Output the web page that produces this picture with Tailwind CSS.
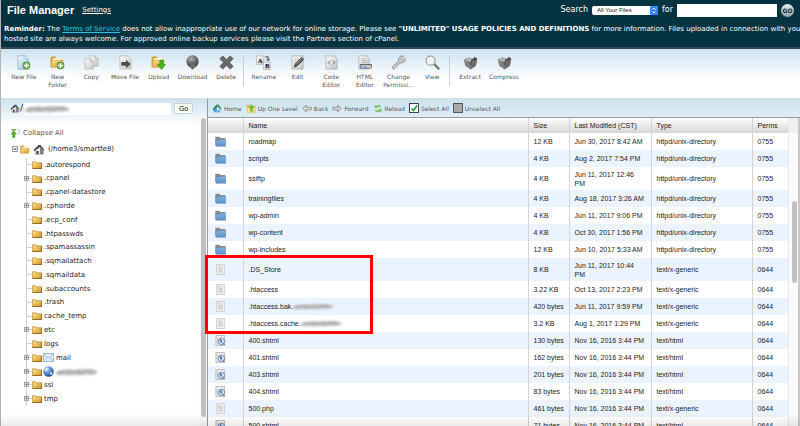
<!DOCTYPE html>
<html lang="en">
<head>
  <meta charset="UTF-8" />
  <meta name="viewport" content="width=device-width, initial-scale=1.0" />
  <title>File Manager</title>
  <script src="https://cdn.jsdelivr.net/npm/@tailwindcss/browser@4"></script>
</head>
<body class="h-screen overflow-hidden flex flex-col bg-white border-l border-[#b4b4b4] font-['DejaVu_Sans',sans-serif] text-[7px] text-[#222]">

  <!-- Icons -->
  <svg class="absolute size-0">
    <defs>
      <linearGradient id="gold" x1="0" y1="0" x2="1" y2="1"><stop offset="0" stop-color="#fbe9a0"/><stop offset="1" stop-color="#d79218"/></linearGradient>
      <linearGradient id="blue" x1="0" y1="0" x2="0" y2="1"><stop offset="0" stop-color="#84b4e2"/><stop offset="1" stop-color="#5c90ca"/></linearGradient>
      <linearGradient id="page" x1="0" y1="0" x2="1" y2="1"><stop offset="0" stop-color="#fdfdfd"/><stop offset="1" stop-color="#c4c4c4"/></linearGradient>
      <linearGradient id="bluepage" x1="0" y1="0" x2="1" y2="1"><stop offset="0" stop-color="#f4faff"/><stop offset="1" stop-color="#8fbfe8"/></linearGradient>
      <radialGradient id="ball" cx=".4" cy=".3" r=".7"><stop offset="0" stop-color="#b0b0b0"/><stop offset="1" stop-color="#3c3c3c"/></radialGradient>
      <radialGradient id="sea" cx=".35" cy=".3" r=".8"><stop offset="0" stop-color="#a9d4fa"/><stop offset="1" stop-color="#0b3c9a"/></radialGradient>
    </defs>
    <symbol id="i-plus" viewBox="0 0 8 8"><circle cx="4" cy="4" r="3.7" fill="#6fb04a" stroke="#3f8028" stroke-width=".6"/><path d="M4 1.6v4.800M1.600 4h4.800" stroke="#fff" stroke-width="1.500"/></symbol>
    <symbol id="i-openfolder" viewBox="0 0 16 14"><path d="M1 12V2l1-1h4l1 2h6v9z" fill="#dca638" stroke="#b98a2a" stroke-width=".6"/><path d="M3 3l10-1v8H3z" fill="#fffbe0"/><path d="M1 13l1.500-8H15l-1.500 8z" fill="url(#gold)" stroke="#c4912c" stroke-width=".6"/></symbol>
    <symbol id="i-folder" viewBox="0 0 10 8"><path d="M.4 7.500V.8h3.400l.8 1h5v5.700z" fill="url(#gold)" stroke="#a8761a" stroke-width=".6"/><path d="M.6 7.600h9.100V2.400" fill="none" stroke="#5f4514" stroke-width=".6"/></symbol>
    <symbol id="i-newfile" viewBox="0 0 16 16"><path d="M2 .8h8l3 3v11.400H2z" fill="url(#bluepage)" stroke="#8eaac2" stroke-width=".7"/><path d="M10 .8v3h3" fill="#fff" stroke="#8eaac2" stroke-width=".6"/><use href="#i-plus" x="7" y="7" width="8.500" height="8.500"/></symbol>
    <symbol id="i-newfolder" viewBox="0 0 16 16"><use href="#i-openfolder" x="0" y="1" width="15" height="13"/><use href="#i-plus" x="7" y="7" width="8.500" height="8.500"/></symbol>
    <symbol id="i-copy" viewBox="0 0 16 16"><path d="M6 1h6l3 3v8H6z" fill="url(#page)" stroke="#aaa" stroke-width=".6"/><path d="M1 4h6l3 3v8H1z" fill="url(#page)" stroke="#aaa" stroke-width=".6"/><path d="M7 4v3h3M12 1v3h3" fill="none" stroke="#aaa" stroke-width=".6"/></symbol>
    <symbol id="i-move" viewBox="0 0 16 16"><path d="M2 1h9l3 3v11H2z" fill="url(#page)" stroke="#aaa" stroke-width=".6"/><path d="M3.500 7.500h5V5l5 4.500-5 4.500v-2.500h-5z" fill="#4d4d4d"/></symbol>
    <symbol id="i-upload" viewBox="0 0 16 16"><use href="#i-openfolder" x="0" y="1" width="15" height="13"/><path d="M9.500 5.500h3.500v4.500h2.500l-4.200 5.500L7 10h2.500z" fill="#4fb81e" stroke="#2c7d0c" stroke-width=".6"/></symbol>
    <symbol id="i-download" viewBox="0 0 16 16"><circle cx="8" cy="6.800" r="6.500" fill="url(#ball)"/><path d="M5.500 8h5v3H13l-5 4.500L3 11h2.500z" fill="#6a6a6a" stroke="#4a4a4a" stroke-width=".4"/></symbol>
    <symbol id="i-delete" viewBox="0 0 16 16"><path d="M4 1l4 4 4-4 3 3-4 4 4 4-3 3-4-4-4 4-3-3 4-4-4-4z" fill="#6a6a6a" stroke="#444" stroke-width=".8"/></symbol>
    <symbol id="i-rename" viewBox="0 0 16 16"><rect x=".5" y="1" width="8" height="9" fill="url(#page)" stroke="#aaa" stroke-width=".6"/><rect x="8" y="7.500" width="7.500" height="8" fill="url(#page)" stroke="#aaa" stroke-width=".6"/><text x="1.800" y="8" font-size="7" font-weight="700" font-family="Liberation Serif">A</text><text x="9.500" y="14" font-size="7" font-weight="700" font-family="Liberation Serif">B</text><path d="M10 2h3v4M11.500 4.500L13 6.200l1.500-1.700" fill="none" stroke="#333" stroke-width="1"/></symbol>
    <symbol id="i-edit" viewBox="0 0 16 16"><path d="M2 1h12v14H2z" fill="url(#page)" stroke="#999" stroke-width=".6"/><path d="M4 4h6M4 6h5M4 8h3" stroke="#bbb" stroke-width=".7"/><path d="M4.500 13l1-3.500 7-7 2 2.300-7 7z" fill="#555" stroke="#222" stroke-width=".6"/><path d="M6.500 10l6-6" stroke="#ddd" stroke-width=".6"/></symbol>
    <symbol id="i-code" viewBox="0 0 16 16"><path d="M2 1h9l3 3v11H2z" fill="url(#page)" stroke="#999" stroke-width=".6"/><path d="M6.500 6L4.500 8l2 2M9.500 6l2 2-2 2" fill="none" stroke="#555" stroke-width="1"/></symbol>
    <symbol id="i-html" viewBox="0 0 16 16"><path d="M2 1h8l3 3v11H2z" fill="url(#page)" stroke="#999" stroke-width=".6"/><path d="M4 4h5M4 6h7M4 8h7" stroke="#aaa" stroke-width=".8"/><rect x="3" y="9.500" width="13" height="5" rx="1" fill="#666"/><text x="4" y="13.600" font-size="4.500" font-weight="700" font-family="Liberation Sans" fill="#fff">HTML</text></symbol>
    <symbol id="i-wrench" viewBox="0 0 16 16"><path d="M1.500 12.500L8 6.500C7.200 3 10 .2 13.200 1.200L10.800 3.800l1.800 1.800L15 3.400c.9 3.200-2 5.800-5.200 5L4 14.600c-1.600 1.300-3.700-.6-2.500-2.100z" fill="#c6c6c6" stroke="#8a8a8a" stroke-width=".8"/></symbol>
    <symbol id="i-view" viewBox="0 0 16 16"><path d="M9.500 9.500l5 5" stroke="#777" stroke-width="2.400" stroke-linecap="round"/><circle cx="6" cy="6" r="4.800" fill="#f3f3f3" stroke="#a2a2a2" stroke-width="1.300"/></symbol>
    <symbol id="i-box" viewBox="0 0 16 16"><path d="M1 5l7 3 7-3-1.300 6.500L8 15.500l-5.700-4z" fill="#808080"/><path d="M8 8l7-3-1.300 6.500L8 15.500z" fill="#6c6c6c"/><path d="M1 5l5-2 4 1 5 1-7 3z" fill="#b4b4b4" stroke="#777" stroke-width=".5"/><path d="M4.500 5.500L8 9c0-3.500 1.500-5 4-5.500V1.500l3.500 2.500L12 6.800V5.500c-2 .7-3 2.500-3.500 5.500z" fill="#484848"/></symbol>
    <symbol id="i-house" viewBox="0 0 12 11"><path d="M2 5.500v4.700h8V5.500L6 2z" fill="#ececec" stroke="#888" stroke-width=".5"/><path d="M.4 6L5.500 1h2l4 5-1.300.6L7 3 1.500 7z" fill="#4a4a4a"/><path d="M7 2.500l3.500 4v3.700H7z" fill="#858585"/><path d="M3.500 7h2v3.200h-2z" fill="#333"/></symbol>
    <symbol id="i-homeblue" viewBox="0 0 12 11"><path d="M2 5.500v4.700h5V5z" fill="#3aa5f0"/><path d="M6 3.500l4.500 3v3.700H6z" fill="#e8eef4" stroke="#7f96ab" stroke-width=".4"/><path d="M.4 6.500L5 1l3-.3 3.500 5-1.300 1L7.200 3 2 7.500z" fill="#3d8a5c"/><path d="M7.500 7H9v3.200H7.500z" fill="#2c6fae"/></symbol>
    <symbol id="i-up" viewBox="0 0 12 11"><path d="M.5 1.500h3.500l1 1H11v8H2z" fill="#f0cd5a" stroke="#c49c30" stroke-width=".6"/><path d="M1.800 4H11l-1 6.500H2z" fill="#fbe792"/><path d="M6.500.8L10 4.500H8V9H5V4.500H3z" fill="#7fbf45" stroke="#4f8f28" stroke-width=".4"/></symbol>
    <symbol id="i-back" viewBox="0 0 12 10"><path d="M1 5l4-4v2.500h6v3H5V9z" fill="#ddd" stroke="#777" stroke-width=".9"/></symbol>
    <symbol id="i-forward" viewBox="0 0 12 10"><path d="M11 5L7 1v2.500H1v3h6V9z" fill="#ddd" stroke="#777" stroke-width=".9"/></symbol>
    <symbol id="i-reload" viewBox="0 0 12 11"><path d="M2 5V1l1.500 1C6 .5 9 1 10.500 4H8C7 3 6 3 5 3.800L6 5z" fill="#7cc06c"/><path d="M10.500 6v4.500L9 9.200C6 11 3 9.500 1.500 7H4c1 1 2 1 3 .3L6 6z" fill="#7cc06c"/></symbol>
    <symbol id="i-collapse" viewBox="0 0 10 9"><path d="M.3 .8h5" stroke="#3b7d22" stroke-width="1"/><path d="M2.800 1.500L5.300 5H4v3.500H1.600V5H.3z" fill="#53b52e" stroke="#2f8414" stroke-width=".4"/><path d="M6.500 1h3M6.500 3h3M6.500 5h3" stroke="#bbb" stroke-width=".8"/></symbol>
    <symbol id="i-mail" viewBox="0 0 11 9"><path d="M.5.500h10v8H.5z" fill="#e2effa" stroke="#88a9c6" stroke-width=".8"/><path d="M.8.800l4.700 4.400L10.200.8M.8 8.200L4 4.500M10.200 8.200L7 4.500" fill="none" stroke="#88a9c6" stroke-width=".7"/></symbol>
    <symbol id="i-globe" viewBox="0 0 11 11"><circle cx="5.500" cy="5.500" r="5.200" fill="url(#sea)"/><path d="M2 3C3.500 1.300 5.500 1.500 5.500 2.500S4 3.500 3.800 4.800 2 4.500 1.500 4zM7 6.500c1.500-.7 2.200 0 2.200.7S8 9 7.300 9z" fill="#dcebf8"/></symbol>
    <symbol id="i-dir" viewBox="0 0 11 11"><path d="M.3 9.500V.7h4.200l1 1.300h4.700V5z" fill="#8a8a8a"/><path d="M1 10.300V4h5l1-1h3.700v7.300z" fill="url(#blue)" stroke="#5c84b4" stroke-width=".5"/></symbol>
    <symbol id="i-text" viewBox="0 0 10 12"><path d="M.5.500h9v11h-9z" fill="#ececec" stroke="#c6c6c6" stroke-width=".8"/><path d="M2.500 3h3M2.500 4.800h5M2.500 6.600h5M2.500 8.400h5" stroke="#b4b4b4" stroke-width=".7"/></symbol>
    <symbol id="i-webpage" viewBox="0 0 11 12"><path d="M.5.500h9.500v11H.5z" fill="#ececec" stroke="#aaa" stroke-width=".8"/><path d="M2 2.500v7" stroke="#c4c4c4" stroke-width="1"/><circle cx="6.500" cy="7" r="3.500" fill="#dde9f6" stroke="#5578a8" stroke-width=".9"/><path d="M5 5l2 1-1 2zM7 8l3 3" fill="#5f88bb" stroke="#46699b" stroke-width="1"/></symbol>
    <symbol id="i-smudge" viewBox="0 0 50 8" preserveAspectRatio="none"><path d="M0 5l5-3 5 0 7-1 5 1 6-1 7 0 6 0 6 1 3 2-2 2-7 1-6-.5-6 1-6-.5-6 .5-6-.5-5 .5-4-.5z" fill="#c2c2c2"/><path d="M4 5l8-2 6 2 7-2 6 2 7-2 7 1" fill="none" stroke="#a2a2a2" stroke-width="1.600"/></symbol>
  </svg>

  <!-- Header -->
  <header class="h-[49px] shrink-0 bg-[#05333f] border-b-2 border-[#33475a] text-white pl-[3px] pr-[6px]">
    <div class="flex items-center h-5">
      <h1 class="pl-[3px] font-['Liberation_Sans',sans-serif] font-bold text-[11px]">File Manager</h1>
      <a href="#" class="ml-2 text-[7px] underline">Settings</a>
      <form class="ml-auto flex items-center gap-1 text-[8px]">
        <label for="scope">Search</label>
        <div class="relative flex">
          <select id="scope" class="appearance-none w-[66px] h-[9px] rounded-xs bg-white pl-[5px] font-['Liberation_Sans',sans-serif] text-[6px] leading-[9px] text-[#222]">
            <option>All Your Files</option>
          </select>
          <svg class="absolute right-0 top-0 w-2 h-[9px] pointer-events-none" viewBox="0 0 8 9"><rect width="8" height="9" rx="1.500" fill="#2f86f3"/><path d="M2.500 3.600L4 2l1.500 1.600M2.500 5.400L4 7l1.500-1.600" fill="none" stroke="#fff" stroke-width=".9"/></svg>
        </div>
        <label for="query">for</label>
        <input id="query" type="text" class="w-[100px] h-[13px] bg-white text-[#222] px-1 text-[8px]" />
        <button type="button" class="size-[13px] rounded-full bg-linear-to-b from-[#e6eef0] to-[#8ba3a9] text-[6px] leading-[13px] font-bold text-[#123]">GO</button>
      </form>
    </div>
    <p class="mt-1 w-[820px] text-[7px] leading-[10px]"><b>Reminder:</b> The <a href="#" class="underline text-[#2cc0e0]">Terms of Service</a> does not allow inappropriate use of our network for online storage. Please see <b>"UNLIMITED" USAGE POLICIES AND DEFINITIONS</b> for more information. Files uploaded in connection with your<br>hosted site are always welcome. For approved online backup services please visit the Partners section of cPanel.</p>
  </header>

  <!-- Toolbar -->
  <nav id="toolbar" class="h-[50px] shrink-0 flex items-start pl-[6px] pt-[6px] bg-linear-to-b from-[#cbe2ef] to-white to-60% border-b border-[#dcdcdc] text-[6px] leading-2 text-[#555]"></nav>

  <div class="flex flex-1 min-h-0">

    <!-- Folder tree -->
    <aside class="relative w-[206px] shrink-0 flex flex-col bg-linear-to-b from-[#cbe2ef] to-white to-[26px]">
      <form class="flex items-center h-[19px] pl-[9px]">
        <svg class="w-[10px] h-[9px]"><use href="#i-house"/></svg>
        <label for="path" class="text-[9px]">/</label>
        <div class="relative w-[147px] ml-px">
          <input id="path" type="text" class="block w-full h-3 bg-white" />
          <svg class="absolute left-0 top-[2px] w-[46px] h-2 blur-[1px]"><use href="#i-smudge"/></svg>
        </div>
        <button type="button" class="ml-[3px] w-[19px] h-[11px] rounded-xs bg-white border border-[#c8d2d8] font-['Liberation_Sans',sans-serif] text-[7px] leading-[9px] text-black">Go</button>
      </form>
      <a href="#" class="flex items-center gap-[2px] h-[14px] mt-2 pl-[10px] text-[#555]"><svg class="w-[10px] h-[9px]"><use href="#i-collapse"/></svg>Collapse All</a>
      <div class="flex items-center h-[18px] pl-[11px]">
        <svg class="size-[6px]" viewBox="0 0 6 6"><rect x=".5" y=".5" width="5" height="5" fill="#fff" stroke="#999"/><path d="M1.500 3h3" stroke="#333"/></svg>
        <svg class="w-[10px] h-[9px] ml-[2px]"><use href="#i-openfolder"/></svg>
        <svg class="w-3 h-[11px] mx-[3px]"><use href="#i-house"/></svg>
        <span>(/home3/smartfe8)</span>
      </div>
      <ul id="tree" class="grid auto-rows-fr h-[248px] shrink-0 ml-[23px]"></ul>
      <div class="absolute right-0 top-[19px] bottom-0 w-2 bg-[#fafafa] flex justify-center">
        <div class="w-[5px] h-[299px] rounded-full bg-[#c1c1c1]"></div>
      </div>
    </aside>

    <!-- File list -->
    <main class="relative flex-1 min-w-0 flex flex-col border-l border-[#999]">
      <div id="actions" class="flex items-center gap-1 h-[19px] shrink-0 pl-[4px] bg-linear-to-b from-[#cbe2ef] to-[#dfeef6] border-b border-[#999] text-[6px] text-[#555]"></div>
      <div class="flex flex-1 min-h-0 border-r-2 border-[#c9c9c9]">
        <div class="flex-1 min-w-0 overflow-hidden">
          <table class="w-full table-fixed font-['Liberation_Sans',sans-serif] text-[7px] leading-[9px]">
            <colgroup><col class="w-[35px]"><col><col class="w-[41px]"><col class="w-[82px]"><col class="w-[101px]"><col class="w-[36px]"></colgroup>
            <thead>
              <tr class="h-[15px] bg-linear-to-b from-white to-[#d6d6d6] text-left">
                <th class="border-r border-[#d4d4d4]"></th>
                <th class="px-[5px] font-normal border-r border-[#d4d4d4]">Name</th>
                <th class="px-[5px] font-normal border-r border-[#d4d4d4]">Size</th>
                <th class="px-[5px] font-normal border-r border-[#d4d4d4] whitespace-nowrap">Last Modified (CST)</th>
                <th class="px-[5px] font-normal border-r border-[#d4d4d4]">Type</th>
                <th class="px-[5px] font-normal">Perms</th>
              </tr>
            </thead>
            <tbody id="files"></tbody>
          </table>
        </div>
        <div class="relative w-[10px] bg-[#fafafa] border-l border-[#e8e8e8]">
          <div class="h-[15px] bg-[#f0f0f0]"></div>
          <div class="absolute left-[3px] top-[83px] w-[5px] h-[82px] rounded-full bg-[#c1c1c1]"></div>
        </div>
      </div>
      <div class="absolute -left-[3px] top-[156px] w-[168px] h-[79px] border-3 border-[#f00]"></div>
    </main>
  </div>
  <div class="fixed inset-x-0 bottom-0 h-3 bg-linear-to-b from-transparent to-black/8 pointer-events-none"></div>

  <script>
    const icon = (name, cls) => `<svg class="${cls}"><use href="#i-${name}"/></svg>`;

    // Toolbar groups: [group width class, [icon, label]...]
    const groups = [
      ['w-[236px]', [['newfile', 'New File'], ['newfolder', 'New Folder'], ['copy', 'Copy'], ['move', 'Move File'], ['upload', 'Upload'], ['download', 'Download'], ['delete', 'Delete']]],
      ['w-[206px]', [['rename', 'Rename'], ['edit', 'Edit'], ['code', 'Code Editor'], ['html', 'HTML Editor'], ['wrench', 'Change Permissi...'], ['view', 'View']]],
      ['w-[72px]', [['box', 'Extract'], ['box', 'Compress']]],
    ];
    document.getElementById('toolbar').innerHTML = groups.map(([width, items], i) =>
      `<div class="${width} h-[31px] flex ${i ? 'border-l border-[#ccc] pl-[3px]' : ''}">` +
      items.map(([name, label]) =>
        `<button class="flex-1 min-w-0 flex flex-col items-center gap-[3px] px-[2px]">${icon(name, 'size-[15px] shrink-0')}<span>${label}</span></button>`
      ).join('') + '</div>').join('');

    const actions = [['homeblue', 'Home'], ['up', 'Up One Level'], ['back', 'Back'], ['forward', 'Forward'], ['reload', 'Reload']];
    document.getElementById('actions').innerHTML = actions.map(([name, label]) =>
      `<button class="flex items-center gap-[2px]">${icon(name, 'w-[10px] h-[9px]')}${label}</button>`).join('') +
      `<button class="flex items-center gap-[2px]"><svg class="size-[10px]" viewBox="0 0 10 10"><rect x=".5" y=".5" width="9" height="9" fill="#fff" stroke="#444"/><path d="M2.500 5.500l2 2L8 2.500" fill="none" stroke="#1f9a2c" stroke-width="1.500"/></svg>Select All</button>` +
      `<button class="flex items-center gap-[2px]"><svg class="size-[10px]" viewBox="0 0 10 10"><rect x=".5" y=".5" width="9" height="9" fill="#aaa" stroke="#555"/></svg>Unselect All</button>`;

    // Tree: [name, has children, extra icon]
    const tree = [
      ['.autorespond'], ['.cpanel', 1], ['.cpanel-datastore'], ['.cphorde', 1], ['.ecp_conf'], ['.htpasswds'],
      ['.spamassassin'], ['.sqmailattach'], ['.sqmaildata'], ['.subaccounts'], ['.trash'], ['cache_temp'],
      ['etc', 1], ['logs'], ['mail', 1, 'mail'], ['', 1, 'globe'], ['ssl', 1], ['tmp', 1],
    ];
    document.getElementById('tree').innerHTML = tree.map(([name, kids, extra]) =>
      `<li class="flex items-center min-h-0">
        <svg class="w-2 h-full shrink-0 overflow-visible" viewBox="0 0 8 14"><path d="M2.500 0v14M3 6.500h5" stroke="#ccc" fill="none"/>${kids ? '<rect x=".5" y="4.500" width="4" height="4" fill="#fff" stroke="#999"/><path d="M1.500 6.500h2M2.500 5.500v2" stroke="#333" stroke-width=".8"/>' : ''}</svg>
        ${icon('folder', 'w-[10px] h-2')}
        ${extra ? icon(extra, 'size-[11px] ml-px') : ''}
        ${name ? `<span class="ml-[2px]">${name}</span>` : icon('smudge', 'w-[43px] h-2 ml-px blur-[1px]')}
      </li>`).join('');

    const dir = 'httpd/unix-directory', txt = 'text/x-generic', html = 'text/html';
    const files = [
      ['roadmap', '12 KB', 'Jun 30, 2017 8:42 AM', dir],
      ['scripts', '4 KB', 'Aug 2, 2017 7:54 PM', dir],
      ['ssiftp', '4 KB', 'Jun 11, 2017 12:46 PM', dir],
      ['trainingfiles', '4 KB', 'Aug 18, 2017 3:26 AM', dir],
      ['wp-admin', '4 KB', 'Jun 11, 2017 9:06 PM', dir],
      ['wp-content', '4 KB', 'Oct 30, 2017 1:56 PM', dir],
      ['wp-includes', '12 KB', 'Jun 10, 2017 5:33 AM', dir],
      ['.DS_Store', '8 KB', 'Jun 11, 2017 10:44 PM', txt],
      ['.htaccess', '3.22 KB', 'Oct 13, 2017 2:23 PM', txt],
      ['.htaccess.bak.', '420 bytes', 'Jun 11, 2017 9:59 PM', txt, 1],
      ['.htaccess.cache.', '3.2 KB', 'Aug 1, 2017 1:29 PM', txt, 1],
      ['400.shtml', '130 bytes', 'Nov 16, 2016 3:44 PM', html],
      ['401.shtml', '162 bytes', 'Nov 16, 2016 3:44 PM', html],
      ['403.shtml', '201 bytes', 'Nov 16, 2016 3:44 PM', html],
      ['404.shtml', '83 bytes', 'Nov 16, 2016 3:44 PM', html],
      ['500.php', '461 bytes', 'Nov 16, 2016 3:44 PM', txt],
      ['500.shtml', '71 bytes', 'Nov 16, 2016 3:44 PM', html],
    ];
    const fileIcon = { [dir]: 'dir', [txt]: 'text', [html]: 'webpage' };
    document.getElementById('files').innerHTML = files.map(([name, size, date, type, hidden]) => {
      // dates with a two-digit hour wrap onto a second line
      const long = date.length > 20;
      return `<tr class="${long ? 'h-[23px]' : 'h-[17px]'} even:bg-[#ebf4fe]">
        <td class="border-r border-[#d4d4d4] pl-[7px]">${icon(fileIcon[type], 'size-[11px]')}</td>
        <td class="px-[5px] border-r border-[#d4d4d4]"><div class="flex items-center">${name}${hidden ? icon('smudge', 'w-[42px] h-[7px] -ml-px blur-[1px]') : ''}</div></td>
        <td class="pl-[5px] border-r border-[#d4d4d4] whitespace-nowrap">${size}</td>
        <td class="pl-[5px] border-r border-[#d4d4d4] ${long ? 'pr-2' : 'whitespace-nowrap'}">${date}</td>
        <td class="pl-[5px] border-r border-[#d4d4d4]">${type}</td>
        <td class="pl-[5px]">${type === dir ? '0755' : '0644'}</td>
      </tr>`;
    }).join('');
  </script>
</body>
</html>
